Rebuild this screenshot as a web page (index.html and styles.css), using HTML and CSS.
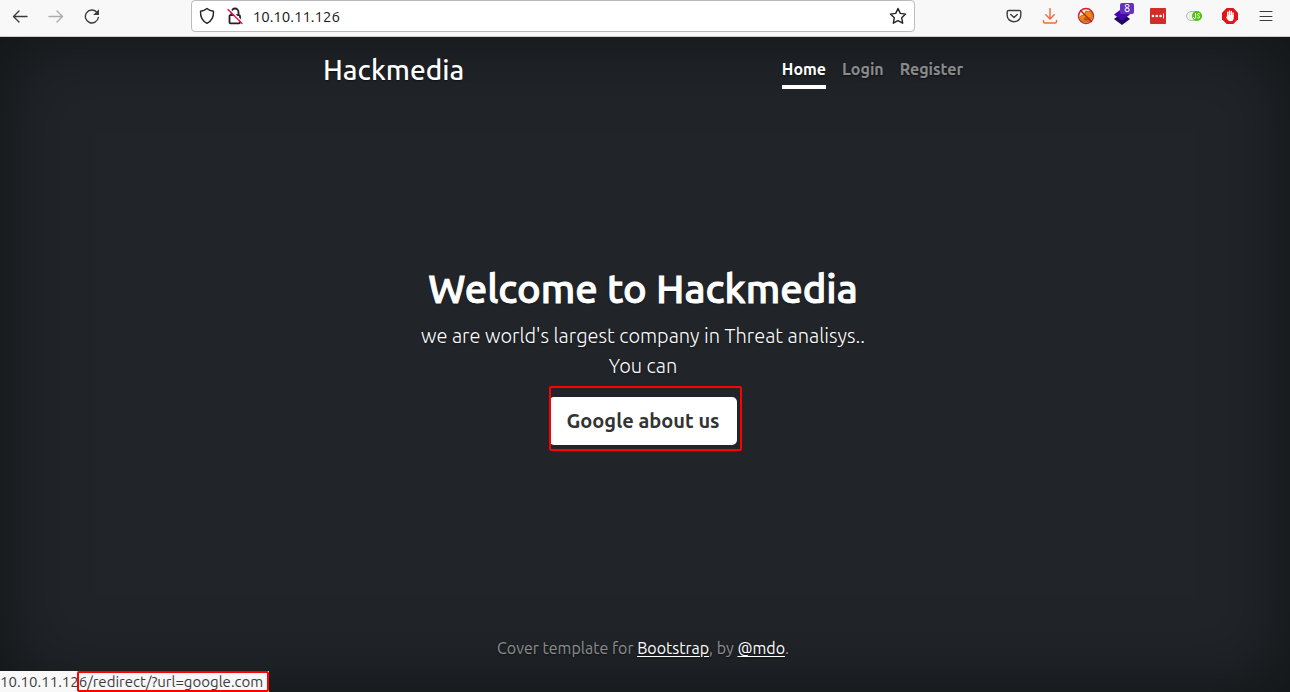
FILE: index.html
```html
<!DOCTYPE html>
<html lang="en">

<head>
    <meta charset="UTF-8">
    <meta name="viewport" content="width=device-width, initial-scale=1.0">
    <title>Hackmedia</title>
    <link rel="stylesheet" href="styles.css">
</head>

<body>
    <div class="toolbar">
        <button class="tool" aria-label="Back">
            <svg width="16" height="16" viewBox="0 0 16 16"><path d="M15 8.500H2M7 3L1.500 8.500L7 14" /></svg>
        </button>
        <button class="tool" aria-label="Forward" disabled>
            <svg width="16" height="16" viewBox="0 0 16 16"><path d="M1 8.500h13M9 3l5.500 5.500L9 14" /></svg>
        </button>
        <button class="tool" aria-label="Reload">
            <svg width="16" height="16" viewBox="0 0 16 16"><path d="M14.300 9.500A6.500 6.500 0 1 1 12.600 4" /><path d="M15 1.200V7H9.200z" fill="#3c3c3f" stroke="none" /></svg>
        </button>
        <div class="spacer"></div>
        <form class="urlbar">
            <svg width="16" height="18" viewBox="0 0 16 18"><path d="M8 1.500C9.500 2.800 12.200 4 14.500 4.300C14.700 10 12 14.500 8 16.300C4 14.500 1.300 10 1.500 4.300C3.800 4 6.500 2.800 8 1.500z" /></svg>
            <svg width="16" height="18" viewBox="0 0 16 18"><path d="M4.500 8V5A3.500 3.500 0 0 1 11.500 5V8M3 8.200H12A1 1 0 0 1 13 9.200V15.300A1 1 0 0 1 12 16.300H3.500A1 1 0 0 1 2.500 15.300V9" stroke-width="1.800" /><path d="M2 1.500L16 15.500" stroke="#fff" /><path d="M1 2.500L15 16.500" stroke="#f0184f" stroke-width="1.400" /></svg>
            <input type="text" aria-label="Address" value="10.10.11.126">
            <button type="button" class="star" aria-label="Bookmark this page">
                <svg width="18" height="18" viewBox="0 0 18 18"><path d="M9 1.500l2.300 4.900 5.300.7-3.900 3.700 1 5.400L9 13.600l-4.700 2.600 1-5.400L1.400 7.100l5.300-.7z" /></svg>
            </button>
        </form>
        <div class="spacer"></div>
        <button class="tool" aria-label="Save to Pocket">
            <svg width="16" height="16" viewBox="0 0 16 16"><path d="M2.500 2.500h11a1.300 1.300 0 0 1 1.300 1.300V7.500a6.800 6.200 0 0 1-13.600 0V3.800a1.300 1.300 0 0 1 1.300-1.300zM4.800 6.500L8 9.500l3.200-3" /></svg>
        </button>
        <button class="tool" aria-label="Downloads">
            <svg width="16" height="16" viewBox="0 0 16 16" class="download"><path d="M8 .5v10M3.800 6.800L8 11l4.200-4.200M1.500 12.500v1a1.500 1.500 0 0 0 1.500 1.500h10a1.500 1.500 0 0 0 1.500-1.500v-1" /></svg>
        </button>
        <button class="tool" aria-label="FoxyProxy">
            <svg width="18" height="18" viewBox="0 0 18 18"><circle cx="9" cy="9" r="7.500" fill="#f6e3d6" stroke="none" /><path d="M4 9l3-1 2-4 2 1 3-1 1 3 0 3-2 4-4 1-4-1-2-3z" fill="#e98a12" stroke="#b5701c" stroke-width="1" /><path d="M6 12l3-2 1 2 3-2-1 3-3 1z" fill="#ac5b0d" stroke="none" /><circle cx="9" cy="9" r="7.500" stroke="#d1222d" /><path d="M3.500 3.500l11 11" stroke="#c41422" /></svg>
        </button>
        <button class="tool" aria-label="Wappalyzer">
            <svg width="18" height="18" viewBox="0 0 18 18" stroke="none"><g stroke="none"><path d="M1 12l4-3h8l4 3-8 6z" fill="#1f0365" /><path d="M1 7.500l8-6 8 6-8 6z" fill="#4608ad" /></g></svg>
            <span class="badge">8</span>
        </button>
        <button class="tool" aria-label="LastPass">
            <svg width="16" height="16" viewBox="0 0 16 16"><rect width="16" height="16" rx="1" fill="#d32d27" stroke="none" /><g fill="#fff" stroke="none"><circle cx="3" cy="8" r="1.300" /><circle cx="6.800" cy="8" r="1.300" /><circle cx="10.600" cy="8" r="1.300" /><path d="M13 5.500h1v5h-1z" /></g></svg>
        </button>
        <button class="tool" aria-label="JavaScript Switcher">
            <svg width="16" height="16" viewBox="0 0 16 16"><rect x=".5" y="3.500" width="14" height="9" rx="4.500" fill="#eee" stroke="#bbb" stroke-width="1" /><circle cx="11" cy="8" r="5" fill="#49c60c" stroke="none" /><path d="M9.500 5.500v4a1 1 0 0 1-2 0M13.700 6c-1-1-2.500-.3-2.300.7.200 1.300 2.300.8 2.300 2.300 0 1.300-1.700 1.300-2.700.5" stroke="#fff" stroke-width="1" /></svg>
        </button>
        <button class="tool" aria-label="AdBlock">
            <svg width="16" height="16" viewBox="0 0 16 16"><path d="M4.700 0h6.600L16 4.700v6.600L11.300 16H4.700L0 11.300V4.700z" fill="#e3131a" stroke="none" /><path d="M5.700 8V4.300M7.500 7.500V3M9.300 7.500V3.500M11 8V5" stroke="#fff" stroke-width="1.400" /><path d="M5 7h6.700v3c0 2-1 3.300-3.200 3.300C6.500 13.300 5 11.500 4 9l1-.6z" fill="#fff" stroke="none" /></svg>
        </button>
        <button class="tool" aria-label="Open menu">
            <svg width="16" height="16" viewBox="0 0 16 16"><path d="M2 3.500h12M2 8.500h12M2 12.500h12" stroke-width="1" /></svg>
        </button>
    </div>

    <div class="page">
        <div class="cover-container">
            <header class="masthead">
                <h3>Hackmedia</h3>
                <nav>
                    <a class="nav-link active" href="#">Home</a>
                    <a class="nav-link" href="#">Login</a>
                    <a class="nav-link" href="#">Register</a>
                </nav>
            </header>

            <main>
                <h1>Welcome to Hackmedia</h1>
                <p class="lead">we are world's largest company in Threat analisys..<br>You can</p>
                <p class="action">
                    <a class="btn" href="/redirect/?url=google.com">Google about us</a>
                    <span class="marker btn-marker"></span>
                </p>
            </main>

            <footer>
                <p>Cover template for <a href="#">Bootstrap</a>, by <a href="#">@mdo</a>.</p>
            </footer>
        </div>
    </div>

    <div class="status">10.10.11.12<span class="status-path">6/redirect/?url=google.com<span class="marker status-marker"></span></span></div>
</body>

</html>
```

FILE: styles.css
```css
* {
    box-sizing: border-box;
}

body {
    margin: 0;
    min-height: 100vh;
    display: flex;
    flex-direction: column;
    font-family: Ubuntu, "Noto Sans", sans-serif;
    font-size: 16px;
    line-height: 24px;
    color: #fff;
    background-color: #212529;
}

/* browser toolbar */
.toolbar {
    display: flex;
    height: 37px;
    padding: 0 6px 4px 2px;
    background-color: #f8f8f8;
    border-bottom: 1px solid #ccc;
}

.toolbar button {
    display: flex;
    align-items: center;
    justify-content: center;
    padding: 0;
    border: 0;
    background: none;
}

.toolbar svg {
    fill: none;
    stroke: #3c3c3f;
    stroke-width: 1.4;
    stroke-linecap: round;
    stroke-linejoin: round;
}

.toolbar .tool {
    position: relative;
    width: 36px;
}

.tool:disabled svg {
    opacity: 0.4;
}

.toolbar .download {
    stroke: #f06a3c;
}

.badge {
    position: absolute;
    top: 3px;
    right: 6px;
    width: 14px;
    height: 11px;
    border-radius: 2px;
    background-color: #6532bd;
    color: #fff;
    font: 10px/11px "Noto Sans", sans-serif;
}

.spacer {
    flex: 1 1 2px;
}

.urlbar {
    flex: 9;
    display: flex;
    align-items: center;
    gap: 12px;
    padding: 0 7px;
    background-color: #fff;
    border: 1px solid #bbb;
    border-radius: 4px;
}

.toolbar .urlbar svg {
    stroke: #222227;
}

.urlbar input {
    flex: 1;
    min-width: 0;
    margin-left: -2px;
    padding: 2px 0 0;
    border: 0;
    outline: 0;
    background: none;
    font: 15px/20px Ubuntu, "Noto Sans", sans-serif;
    color: #15141a;
}

/* cover page */
.page {
    flex: 1;
    display: flex;
    justify-content: center;
    padding-right: 4px;
    text-align: center;
    text-shadow: 0 1px 2px rgba(0, 0, 0, 0.5);
    box-shadow: inset 0 0 80px rgba(0, 0, 0, 0.5);
}

.cover-container {
    width: 100%;
    max-width: 672px;
    padding: 16px;
    display: flex;
    flex-direction: column;
    justify-content: space-between;
}

.masthead {
    display: flex;
    justify-content: space-between;
    align-items: flex-start;
}

h1,
h3 {
    margin: 0;
    font-weight: 500;
}

h3 {
    font-size: 28px;
    line-height: 34px;
}

nav {
    display: flex;
    gap: 16px;
}

.nav-link {
    padding: 4px 0;
    border-bottom: 4px solid transparent;
    color: rgba(255, 255, 255, 0.5);
    font-weight: 700;
    text-decoration: none;
}

.nav-link.active {
    color: #fff;
    border-bottom-color: #fff;
}

h1 {
    margin-bottom: 8px;
    font-size: 40px;
    line-height: 48px;
    -webkit-text-stroke: 1px #fff;
}

.lead {
    margin: 0 0 16px;
    font-size: 20px;
    font-weight: 300;
    line-height: 30px;
}

.action {
    position: relative;
    width: fit-content;
    margin: 0 auto 16px;
}

.btn {
    display: block;
    padding: 9px 17px;
    border-radius: 5px;
    background-color: #fff;
    color: #333;
    font-size: 20px;
    font-weight: 700;
    line-height: 30px;
    text-decoration: none;
    text-shadow: none;
}

.marker {
    position: absolute;
    border: 2px solid #f00;
    border-radius: 2px;
}

.btn-marker {
    inset: -11px -5px -6px 0;
}

footer p {
    margin: 0 0 16px;
    color: rgba(255, 255, 255, 0.5);
}

footer a {
    color: #fff;
    text-underline-offset: 2px;
}

/* link target shown at the bottom of the window */
.status {
    position: fixed;
    left: 0;
    bottom: 0;
    padding-right: 6px;
    background-color: #f8f8f8;
    color: #3c3c3f;
    font-size: 15px;
    line-height: 21px;
}

.status-path {
    position: relative;
    display: inline-block;
}

.status-marker {
    inset: 0 -6px 0 -2px;
}
```
